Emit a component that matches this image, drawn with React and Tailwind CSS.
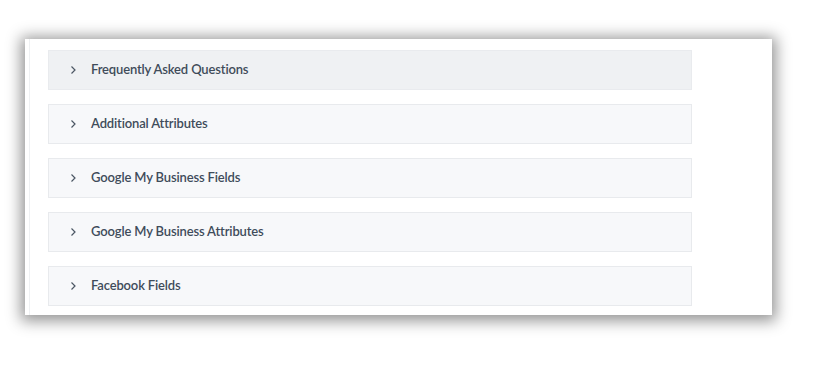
import React from "react";

const items = [
  { label: "Frequently Asked Questions", active: true },
  { label: "Additional Attributes" },
  { label: "Google My Business Fields" },
  { label: "Google My Business Attributes" },
  { label: "Facebook Fields" },
];

function Chevron() {
  return (
    <svg width="8" height="10" viewBox="0 0 8 10" className="shrink-0">
      <path d="M2.5 1.5 L6 5 L2.5 8.5" fill="none" stroke="#4b5663" strokeWidth="1.2" />
    </svg>
  );
}

export default function App() {
  return (
    <div className="w-[824px] h-[370px] bg-white pt-[39px] pl-[25px]" style={{ fontFamily: "Lato, 'Noto Sans', sans-serif" }}>
      <div className="w-[747px] h-[276px] bg-white shadow-[0_2px_14px_4px_rgba(0,0,0,0.42)] pl-[4px]">
        <div className="h-full border-l border-[#eef0f2] pl-[18px] pt-[11px] flex flex-col gap-[14px]">
          {items.map((it) => (
            <div
              key={it.label}
              className={`w-[644px] h-[40px] border flex items-center pl-[20px] gap-[14px] ${
                it.active ? "bg-[#eff1f3] border-[#e9ebee]" : "bg-[#f7f8fa] border-[#e8eaed]"
              }`}
            >
              <Chevron />
              <span className="text-[13px] font-semibold text-[#3f4c5a] tracking-[-0.15px] pb-[1px]">{it.label}</span>
            </div>
          ))}
        </div>
      </div>
    </div>
  );
}
